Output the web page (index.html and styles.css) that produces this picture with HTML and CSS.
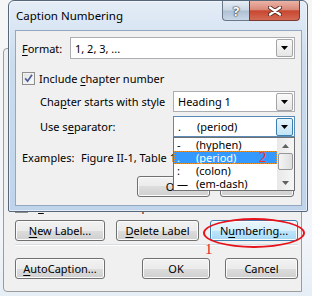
FILE: index.html
```html
<!DOCTYPE html>
<html lang="en">
<head>
    <meta charset="UTF-8">
    <title>Caption Numbering</title>
    <link rel="stylesheet" href="styles.css">
</head>
<body>
<div class="screen">
    <!-- Caption dialog (behind) -->
    <div class="parent">
        <div class="exclude">
            <span class="check"></span>
            <span>E<u>x</u>clude label from caption</span>
        </div>
        <div class="btn-row first">
            <div class="btn w90"><u>N</u>ew Label...</div>
            <div class="btn w83"><u>D</u>elete Label</div>
            <div class="btn w88 hot">N<u>u</u>mbering...</div>
        </div>
        <div class="sep"></div>
        <div class="btn-row second">
            <div class="btn w90"><u>A</u>utoCaption...</div>
            <div class="btn w68 ok">OK</div>
            <div class="btn w73">Cancel</div>
        </div>
    </div>

    <!-- Caption Numbering dialog -->
    <div class="dlg">
        <div class="title">Caption Numbering</div>
        <div class="caption-btns">
            <div class="cbtn help"><span>?</span></div>
            <div class="cbtn close">
                <svg width="14" height="10" viewBox="0 0 14 10">
                    <path d="M2 1.5 L12 8.5 M12 1.5 L2 8.5" stroke="#5a2a22" stroke-width="4.2" stroke-linecap="round"/>
                    <path d="M2 1.5 L12 8.5 M12 1.5 L2 8.5" stroke="#fff" stroke-width="2.4" stroke-linecap="round"/>
                </svg>
            </div>
        </div>
        <div class="client">
            <div class="row format">
                <span class="lbl"><u>F</u>ormat:</span>
                <div class="combo">
                    <span class="val">1, 2, 3, ...</span>
                    <span class="arrow"><svg width="7" height="4" viewBox="0 0 7 4"><polygon points="0,0 7,0 3.5,4" fill="#000"/></svg></span>
                </div>
            </div>
            <div class="row chk">
                <span class="check on">
                    <svg width="11" height="11" viewBox="0 0 11 11"><path d="M2.2 5.4 L4.6 8.2 L9 1.8" fill="none" stroke="#4a5e99" stroke-width="1.7"/></svg>
                </span>
                <span>Include <u>c</u>hapter number</span>
            </div>
            <div class="row sub style">
                <span class="lbl">Cha<u>p</u>ter starts with style</span>
                <div class="combo">
                    <span class="val">Heading 1</span>
                    <span class="arrow"><svg width="7" height="4" viewBox="0 0 7 4"><polygon points="0,0 7,0 3.5,4" fill="#000"/></svg></span>
                </div>
            </div>
            <div class="row sub separator">
                <span class="lbl">Use s<u>e</u>parator:</span>
                <div class="combo focus">
                    <span class="val"><span class="sym">.</span>(period)</span>
                    <span class="arrow"><svg width="7" height="4" viewBox="0 0 7 4"><polygon points="0,0 7,0 3.5,4" fill="#000"/></svg></span>
                </div>
            </div>
            <div class="row examples">
                <span class="ex-lbl">Examples:</span>
                <span>Figure II-1, Table 1</span>
            </div>
            <div class="row dlg-btns">
                <div class="btn ok-small">OK</div>
                <div class="btn cancel-small">Cancel</div>
            </div>

            <!-- open drop-down of the separator box -->
            <div class="droplist">
                <div class="item"><span class="sym">-</span>(hyphen)</div>
                <div class="item sel"><span class="sym">.</span>(period)<span class="note note-2">2</span></div>
                <div class="item"><span class="sym">:</span>(colon)</div>
                <div class="item"><span class="sym">—</span>(em-dash)</div>
                <div class="scroll">
                    <span class="sarrow"><svg width="7" height="4" viewBox="0 0 7 4"><polygon points="0,4 7,4 3.5,0" fill="#606060"/></svg></span>
                    <span class="thumb"></span>
                    <span class="sarrow down"><svg width="7" height="4" viewBox="0 0 7 4"><polygon points="0,0 7,0 3.5,4" fill="#606060"/></svg></span>
                </div>
            </div>
        </div>
    </div>

    <div class="ring"></div>
    <span class="note note-1">1</span>
</div>
</body>
</html>
```

FILE: styles.css
```css
* {
    box-sizing: border-box;
}
body {
    margin: 0;
    font-family: "Noto Sans", sans-serif;
    font-size: 11px;
    color: #000;
}
u {
    text-underline-offset: 2px;
}
.screen {
    position: relative;
    width: 312px;
    height: 296px;
    overflow: hidden;
    padding: 48px 10px 0 3px;
    background: linear-gradient(#f6f6f6, #f2f5f9 80%, #e6eef6);
}

/* parent dialog */
.parent {
    width: 299px;
    height: 244px;
    border: 1px solid #9c9c9c;
    border-radius: 4px 0 0 4px;
    background: #f0f0f0;
    padding: 151px 3px 0 11px;
}
.exclude {
    display: flex;
    align-items: center;
    gap: 4px;
    height: 13px;
}
.btn-row {
    display: flex;
    gap: 11px;
}
.btn-row.first {
    margin-top: 7px;
}
.btn-row.second {
    margin-top: 12px;
}
.sep {
    height: 2px;
    margin-top: 3px;
    width: 283px;
    border-top: 1px solid #d6dde4;
    border-bottom: 1px solid #fff;
}
.btn {
    height: 21px;
    border: 1px solid #707070;
    border-radius: 3px;
    background: linear-gradient(#f2f2f2 0%, #ebebeb 50%, #dddddd 50%, #cfcfcf 100%);
    box-shadow: inset 0 0 0 1px #fbfbfb;
    display: flex;
    align-items: center;
    justify-content: center;
    line-height: 1;
}
.btn.hot {
    border-color: #3c7fb1;
    background: linear-gradient(#eaf6fd 0%, #d9f0fc 50%, #bee6fd 50%, #a7d9f5 100%);
}
.w90 { width: 90px; }
.w83 { width: 83px; }
.w88 { width: 88px; }
.w68 { width: 68px; }
.w73 { width: 73px; }
.btn.ok {
    margin-left: 26px;
}
.btn-row.second .w73 {
    margin-left: 4px;
}

.check {
    width: 13px;
    height: 13px;
    border: 1px solid #8e8f8f;
    background: linear-gradient(135deg, #dcdcdc, #fbfbfb);
    box-shadow: inset 0 0 0 1px #f2f2f2;
    display: flex;
    align-items: center;
    justify-content: center;
    flex: none;
}
.check.on {
    background: linear-gradient(135deg, #e2e2e2, #fcfcfc);
}

/* Caption Numbering window */
.dlg {
    position: absolute;
    left: 8px;
    top: 0;
    width: 300px;
    height: 212px;
    border: 1px solid #56677a;
    border-radius: 6px 6px 2px 2px;
    background: linear-gradient(#e4edf7, #cbdcee 30%, #bfd4eb);
    box-shadow: inset 0 0 0 1px rgba(255, 255, 255, 0.55);
    padding: 29px 5px 5px 6px;
}
.title {
    position: absolute;
    left: 7px;
    top: 7px;
    font-size: 11.5px;
}
.caption-btns {
    position: absolute;
    left: 213px;
    top: 0;
    display: flex;
}
.cbtn {
    height: 20px;
    border: 1px solid #6b7888;
    border-top: none;
    display: flex;
    align-items: center;
    justify-content: center;
}
.cbtn.help {
    width: 27px;
    border-right: none;
    border-radius: 0 0 0 4px;
    background: linear-gradient(#e6edf5 0%, #cad6e4 48%, #afc0d4 52%, #c9d7e7 100%);
}
.cbtn.help span {
    color: #fff;
    font-weight: bold;
    font-size: 13px;
    text-shadow: 0 0 1px #2c3a4c, 0 0 1px #2c3a4c, 0 0 2px #2c3a4c;
}
.cbtn.close {
    width: 51px;
    border-color: #7a3a30;
    border-radius: 0 0 4px 0;
    background: linear-gradient(#ebb3a6 0%, #d98a7b 45%, #c8472f 52%, #d36a55 100%);
}
.client {
    position: relative;
    height: 100%;
    border: 1px solid #93a7be;
    background: #f0f0f0;
    padding: 6px 6px 0 6px;
}
.row {
    display: flex;
    align-items: center;
}
.row.format {
    height: 22px;
}
.row.format .lbl {
    width: 48px;
}
.combo {
    flex: 1;
    height: 22px;
    border: 1px solid #abadb3;
    background: #fff;
    display: flex;
    align-items: center;
    padding-left: 4px;
}
.combo .val {
    flex: 1;
    display: flex;
}
.combo .arrow {
    width: 17px;
    height: 18px;
    margin-right: 1px;
    border: 1px solid #a5a5a5;
    border-radius: 2px;
    background: linear-gradient(#fafafa, #e6e6e6);
    display: flex;
    align-items: center;
    justify-content: center;
}
.combo.focus {
    border-color: #5a8bb8;
}
.combo.focus .arrow {
    border-color: #3c7fb1;
    background: linear-gradient(#e8f5fc, #c2e4f6);
}
.sym {
    width: 19px;
    flex: none;
}
.row.chk {
    margin-top: 13px;
    height: 13px;
    gap: 4px;
}
.row.sub {
    height: 21px;
    padding-left: 18px;
}
.row.sub .lbl {
    width: 133px;
}
.row.sub .combo {
    height: 21px;
}
.row.style {
    margin-top: 6px;
}
.row.separator {
    margin-top: 4px;
}
.row.examples {
    margin-top: 13px;
    height: 14px;
}
.ex-lbl {
    width: 59px;
}
.row.dlg-btns {
    margin-top: 12px;
    padding-left: 115px;
    gap: 10px;
}
.ok-small {
    width: 73px;
}
.cancel-small {
    width: 74px;
}

/* drop-down list */
.droplist {
    position: absolute;
    left: 157px;
    top: 106px;
    width: 122px;
    height: 54px;
    border: 1px solid #707070;
    background: #fff;
}
.item {
    height: 13px;
    line-height: 13px;
    padding-left: 3px;
    display: flex;
    width: 103px;
    position: relative;
}
.item.sel {
    background: #3399ff;
    color: #fff;
    outline: 1px dotted #e8902a;
    outline-offset: -1px;
}
.scroll {
    position: absolute;
    right: 0;
    top: 0;
    width: 17px;
    height: 52px;
    background: linear-gradient(90deg, #e8e8e8, #f6f6f6);
    display: flex;
    flex-direction: column;
    align-items: center;
}
.sarrow {
    height: 15px;
    display: flex;
    align-items: center;
}
.thumb {
    width: 15px;
    height: 17px;
    border: 1px solid #979797;
    border-radius: 2px;
    background: linear-gradient(90deg, #f4f4f4, #dedede);
}
.sarrow.down {
    margin-top: auto;
}

/* annotations */
.note {
    position: absolute;
    font-family: "Liberation Serif", serif;
    font-size: 15px;
    color: #e3202a;
    line-height: 1;
}
.note-2 {
    left: 85px;
    top: -1px;
    color: #ff2a2a;
}
.note-1 {
    left: 205px;
    top: 242px;
}
.ring {
    position: absolute;
    left: 203px;
    top: 218px;
    width: 102px;
    height: 30px;
    border: 2px solid #e5141c;
    border-radius: 50%;
}
```
